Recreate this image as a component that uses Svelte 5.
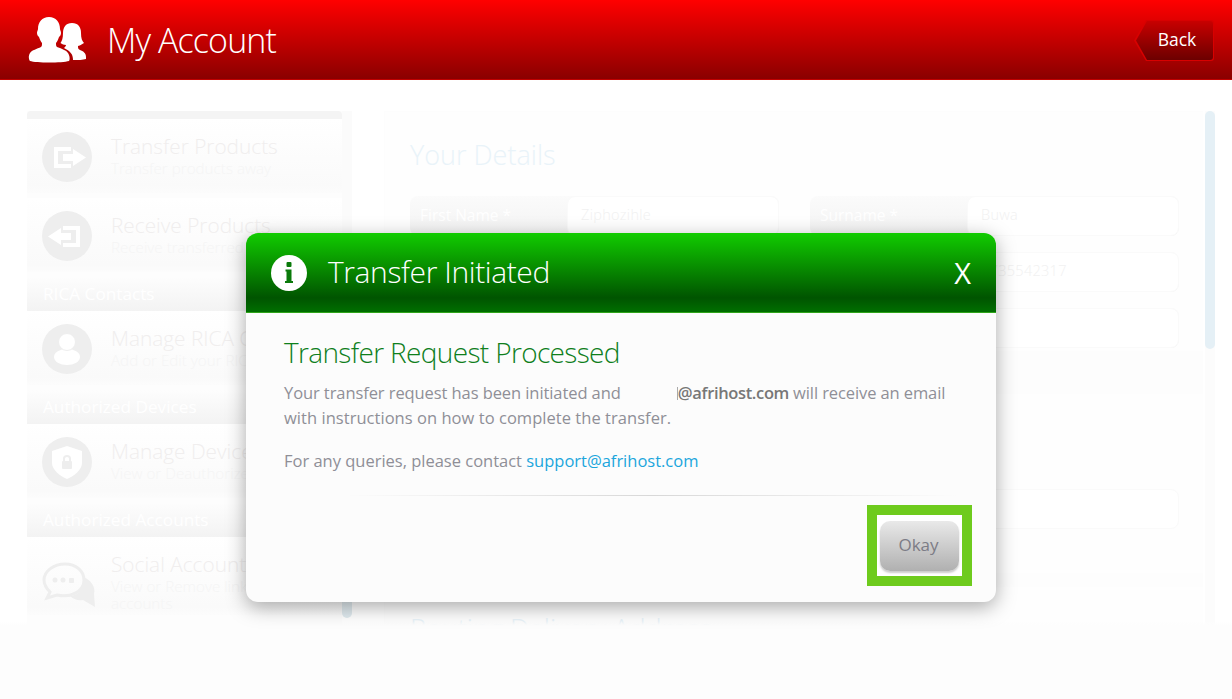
<script lang="ts">
  const menu = [
    { type: 'item', icon: 'out', title: 'Transfer Products', sub: 'Transfer products away' },
    { type: 'item', icon: 'in', title: 'Receive Products', sub: 'Receive transferred products' },
    { type: 'head', title: 'RICA Contacts' },
    { type: 'item', icon: 'user', title: 'Manage RICA Contacts', sub: 'Add or Edit your RICA contacts' },
    { type: 'head', title: 'Authorized Devices' },
    { type: 'item', icon: 'shield', title: 'Manage Devices', sub: 'View or Deauthorize devices' },
    { type: 'head', title: 'Authorized Accounts' },
    { type: 'item', icon: 'chat', title: 'Social Accounts', sub: 'View or Remove linked social accounts' }
  ];
  const fields = [
    { label: 'First Name *', value: 'Ziphozihle', label2: 'Surname *', value2: 'Buwa' },
    { label: 'Email *', value: '', label2: 'Mobile *', value2: '0735542317' },
    { label: 'Company', value: '', label2: 'Phone', value2: '' }
  ];
</script>

<div class="page">
  <header class="topbar">
    <svg class="account-icon" width="61" height="48" viewBox="0 0 61 48">
      <path fill="#fff" d="M46 7C52 7 55 11 55 17 55 22 56 25 58 27 55 29 53 30 52 30 52 32 52 33 54 34 57 35 60 37 60 41V43C57 44 52 44 47 44 47 38 44 35 38 32 39 31 40 30 40 29 38 29 36 28 34.500 27 36 25 37 22 37 17 37 11 40 7 46 7Z" />
      <path fill="#fff" d="M23 1C30 1 34 6 34 13 34 14 35 15 35 17 35 19 34 20 33 21 32 24 31 26 30 27 30 29 30 30 31 31 36 33 40 34 42 37 44 40 44 44 43 45 36 47 10 47 4 45 3 44 2 40 4 37 6 34 11 33 15 31 16 30 16 29 16 27 15 26 14 24 13 21 12 20 11 19 11 17 11 15 12 14 12 13 12 6 16 1 23 1Z" />
    </svg>
    <h1>My Account</h1>
    <button class="back"><span>Back</span></button>
  </header>

  <main class="content">
    <aside class="sidebar">
      <div class="side-top"></div>
      {#each menu as entry}
        {#if entry.type === 'head'}
          <div class="side-head">{entry.title}</div>
        {:else}
          <div class="side-item">
            <span class="side-icon" class:bare={entry.icon === 'chat'}>
              <svg width="50" height="50" viewBox="0 0 50 50">
                {#if entry.icon === 'out'}
                  <path fill="none" stroke="#fff" stroke-width="4" d="M29 17H14V34H29" />
                  <path fill="#fff" d="M21 22H31V17L44 25.500 31 34V29H21Z" />
                {:else if entry.icon === 'in'}
                  <path fill="none" stroke="#fff" stroke-width="4" d="M21 17H36V34H21" />
                  <path fill="#fff" d="M29 22H19V17L6 25.500 19 34V29H29Z" />
                {:else if entry.icon === 'user'}
                  <ellipse cx="25" cy="33" rx="13" ry="8" fill="#fff" />
                  <circle cx="25" cy="18" r="8.500" fill="#fff" stroke="#eee" stroke-width="1" />
                {:else if entry.icon === 'shield'}
                  <path fill="#fff" d="M25 9 40 14V26C40 33 32 39 25 42 18 39 10 33 10 26V14Z" />
                  <rect x="20" y="24" width="10" height="8" rx="1" fill="#eee" />
                  <path fill="none" stroke="#eee" stroke-width="2" d="M22 24V21.500C22 18 28 18 28 21.500V24" />
                {:else}
                  <path fill="none" stroke="#eee" stroke-width="3" d="M23 2C12 2 2 9 2 18 2 23 5 27 8 30L5 36 15 33C28 36 42 30 42 18 42 9 34 2 23 2Z" />
                  <path fill="#eee" d="M40 14C49 18 54 25 52 32L53 45 41 38C36 39 31 37 28 34 38 33 44 25 40 14Z" />
                  <circle cx="13" cy="18" r="2.500" fill="#eee" />
                  <circle cx="21" cy="18" r="2.500" fill="#eee" />
                  <rect x="27" y="16" width="5" height="5" rx="1" fill="#eee" />
                {/if}
              </svg>
            </span>
            <div class="side-text">
              <div class="side-title">{entry.title}</div>
              <div class="side-sub">{entry.sub}</div>
            </div>
          </div>
        {/if}
      {/each}
    </aside>
    <div class="side-scroll"></div>

    <section class="details">
      <h2>Your Details</h2>
      <div class="rows">
        {#each fields as f}
          <div class="field-row">
            <div class="field"><span class="flabel">{f.label}</span><span class="finput">{f.value}</span></div>
            <div class="field"><span class="flabel">{f.label2}</span><span class="finput">{f.value2}</span></div>
          </div>
        {/each}
      </div>
      <div class="band"></div>
      <div class="field-row lone">
        <div class="field"><span class="flabel"></span><span class="finput"></span></div>
        <div class="field"><span class="flabel"></span><span class="finput"></span></div>
      </div>
      <div class="band thin"></div>
      <h2 class="delivery">Routing Delivery Address</h2>
    </section>
    <div class="main-scroll"><div class="thumb"></div></div>
  </main>

  <div class="modal">
    <div class="modal-head">
      <svg class="info" width="36" height="36" viewBox="0 0 36 36">
        <circle cx="18" cy="18" r="18" fill="#fff" />
        <rect x="15.500" y="7" width="5" height="5" rx="1" fill="#0a7a0a" />
        <path fill="#0a7a0a" d="M14.500 14.500H20.500V26H22V28H14V26H15.500V16.500H14.500Z" />
      </svg>
      <span class="modal-title">Transfer Initiated</span>
      <span class="close">X</span>
    </div>
    <div class="modal-body">
      <h3>Transfer Request Processed</h3>
      <p class="line-a"><span class="tight">Your transfer request has been initiated and</span> <span class="masked"></span><strong>@afrihost.com</strong> <span class="rest">will receive an email</span><br /><span class="wide">with instructions on how to complete the transfer.</span></p>
      <p class="line-b">For any queries, please contact <a href="#top">support@afrihost.com</a></p>
      <div class="rule"></div>
      <div class="actions">
        <div class="highlight"><button class="okay">Okay</button></div>
      </div>
    </div>
  </div>
</div>

<style>
  :global(body) {
    margin: 0;
    background: #fdfdfd;
  }

  .page {
    width: 1232px;
    height: 699px;
    position: relative;
    overflow: hidden;
    font-family: "Open Sans", "Noto Sans", sans-serif;
    font-weight: 300;
    background: #fdfdfd;
  }

  .topbar {
    height: 79px;
    display: flex;
    align-items: center;
    padding: 0 18px 0 26px;
    background: linear-gradient(#ff0000, #8a0000);
    border-bottom: 1px solid #c00000;
  }

  .account-icon {
    margin-right: 20px;
  }

  h1 {
    margin: 0;
    flex: 1;
    font-size: 34px;
    font-weight: 300;
    letter-spacing: -0.9px;
    color: #fff;
  }

  .back {
    position: relative;
    width: 80px;
    height: 41px;
    margin-top: 2px;
    border: 0;
    padding: 0;
    background: #d80000;
    clip-path: polygon(12px 0, 100% 0, 100% 100%, 12px 100%, 0 50%);
    border-radius: 0 3px 3px 0;
  }

  .back::before {
    content: "";
    position: absolute;
    inset: 1px;
    background: linear-gradient(#c80000, #6c0000);
    clip-path: polygon(12px 0, 100% 0, 100% 100%, 12px 100%, 1px 50%);
    border-radius: 0 3px 3px 0;
  }

  .back span {
    position: relative;
    display: block;
    padding: 0 0 3px 6px;
    font: 400 17.500px "Open Sans", sans-serif;
    color: #fff;
  }

  .content {
    position: relative;
    display: flex;
    padding: 31px 0 0 27px;
    height: 514px;
    overflow: hidden;
    background: #fff;
  }

  .content::after {
    content: "";
    position: absolute;
    left: 0;
    right: 0;
    bottom: 0;
    height: 4px;
    background: linear-gradient(rgba(253, 253, 253, 0), #fdfdfd);
  }

  .sidebar {
    width: 315px;
    flex-shrink: 0;
    background: #fdfdfd;
  }

  .side-top {
    height: 8px;
    background: #f4f4f4;
    border-radius: 4px 4px 0 0;
  }

  .side-item {
    display: flex;
    gap: 19px;
    padding: 14px 15px 3px;
    background: linear-gradient(#fff, #fafafa 90%, #fcfcfc);
    margin-bottom: 5px;
    min-height: 57px;
    white-space: nowrap;
    overflow: hidden;
  }

  .side-icon {
    width: 50px;
    height: 50px;
    margin-top: -1px;
    border-radius: 50%;
    background: #eee;
    flex-shrink: 0;
  }

  .side-icon svg {
    overflow: visible;
  }

  .side-icon.bare {
    background: none;
    margin-top: 11px;
  }

  .side-title {
    font-size: 20.800px;
    line-height: 26px;
    color: #f0eeee;
  }

  .side-sub {
    margin-top: 1px;
    font-size: 15.200px;
    line-height: 17px;
    color: #f5f5f5;
    white-space: normal;
    width: 230px;
  }

  .side-head {
    height: 34px;
    line-height: 33px;
    padding-left: 16px;
    font-size: 17.200px;
    font-weight: 400;
    color: #fff;
    background: linear-gradient(#fdfdfd, #f3f3f3);
  }

  .side-scroll {
    width: 10px;
    height: 507px;
    flex-shrink: 0;
    border-radius: 0 0 5px 5px;
    background: linear-gradient(#fbfbfb 80%, #dfeaef);
  }

  .details {
    width: 793px;
    flex-shrink: 0;
    margin: 0 2px 0 32px;
    padding: 23px 0 0 25px;
    border-top: 1px solid #fdfdfd;
    border-left: 1px solid #fdfdfd;
    background: #fefefe;
  }

  h2 {
    margin: 0 0 21px;
    font-size: 27px;
    line-height: 40px;
    font-weight: 300;
    color: #e9f3f9;
  }

  h2.delivery {
    margin: 22px 0 0;
  }

  .rows {
    display: flex;
    flex-direction: column;
    gap: 16px;
  }

  .band {
    height: 43px;
    margin: 3px 0 0 -25px;
    background: #fdfdfd;
  }

  .band.thin {
    height: 14px;
    margin-top: 44px;
  }

  .field-row {
    display: flex;
    gap: 31px;
  }

  .field-row.lone {
    margin-top: 95px;
  }

  .field {
    width: 369px;
    height: 40px;
    display: flex;
    background: linear-gradient(#fbfbfb, #f3f3f3);
    border-radius: 8px;
  }

  .lone .field {
    background: none;
  }

  .flabel {
    width: 157px;
    padding-left: 10px;
    box-sizing: border-box;
    font-size: 15.500px;
    line-height: 38px;
    font-weight: 400;
    color: #fff;
  }

  .finput {
    flex: 1;
    border: 1px solid #fafafa;
    border-radius: 8px;
    background: #fff;
    padding-left: 13px;
    font-size: 14.500px;
    line-height: 36px;
    letter-spacing: 0.3px;
    color: #f1f1f1;
  }

  .main-scroll {
    width: 10px;
    flex-shrink: 0;
    background: #fcfcfc;
  }

  .thumb {
    height: 238px;
    border-radius: 5px;
    background: #e5f0f6;
  }

  .modal {
    position: absolute;
    left: 246px;
    top: 233px;
    width: 750px;
    height: 369px;
    border-radius: 12px;
    overflow: hidden;
    background: #fcfcfc;
    box-shadow: 0 5px 20px rgba(0, 0, 0, 0.34);
  }

  .modal-head {
    height: 79px;
    display: flex;
    align-items: center;
    padding: 0 25px;
    background: linear-gradient(#11cc00 0%, #005400 82%, #006c00 98%);
    border-bottom: 1px solid #2fa51a;
    color: #fff;
  }

  .info {
    margin-right: 21px;
  }

  .modal-title {
    flex: 1;
    margin-top: -2px;
    font-size: 30px;
    letter-spacing: -0.4px;
  }

  .close {
    font-size: 29px;
    font-weight: 400;
  }

  .modal-body {
    padding: 19px 38px 0;
  }

  h3 {
    margin: 0;
    font-size: 28px;
    line-height: 40px;
    font-weight: 300;
    letter-spacing: -0.65px;
    color: #0f7f1c;
  }

  p {
    margin: 0;
    font-size: 16.500px;
    line-height: 25px;
    font-weight: 400;
    color: #8f8f97;
    letter-spacing: -0.2px;
  }

  .line-a {
    margin-top: 8px;
    white-space: nowrap;
  }

  .tight {
    letter-spacing: -0.085px;
  }

  .rest {
    letter-spacing: -0.1px;
  }

  .wide {
    letter-spacing: 0.04px;
  }

  .line-b {
    margin-top: 18px;
    letter-spacing: -0.01px;
  }

  .masked {
    display: inline-block;
    width: 54px;
    height: 13px;
    border-right: 1px solid #aaa;
    box-sizing: border-box;
    vertical-align: -1px;
    margin-left: -1px;
  }

  strong {
    color: #777;
    font-weight: 600;
    letter-spacing: -0.35px;
  }

  a {
    color: #1ba6dc;
    text-decoration: none;
  }

  .rule {
    height: 1px;
    margin: 22px 0 0 62px;
    background: linear-gradient(90deg, #fcfcfc, #d8d8d8 50%, #fcfcfc);
  }

  .actions {
    display: flex;
    justify-content: flex-end;
    margin: 9px -14px 0 0;
  }

  .highlight {
    border: 10px solid #6ecb1d;
    background: #fff;
    width: 85px;
    height: 61px;
    display: flex;
    align-items: center;
    justify-content: center;
  }

  .okay {
    width: 79px;
    height: 50px;
    border: 0;
    border-radius: 10px;
    padding: 0 2px 2px 0;
    font: 400 17px "Open Sans", sans-serif;
    color: #7c7c86;
    background: linear-gradient(#e9e9e9, #b0b0b0);
    box-shadow: 0 2px 2px #ccc;
  }
</style>
